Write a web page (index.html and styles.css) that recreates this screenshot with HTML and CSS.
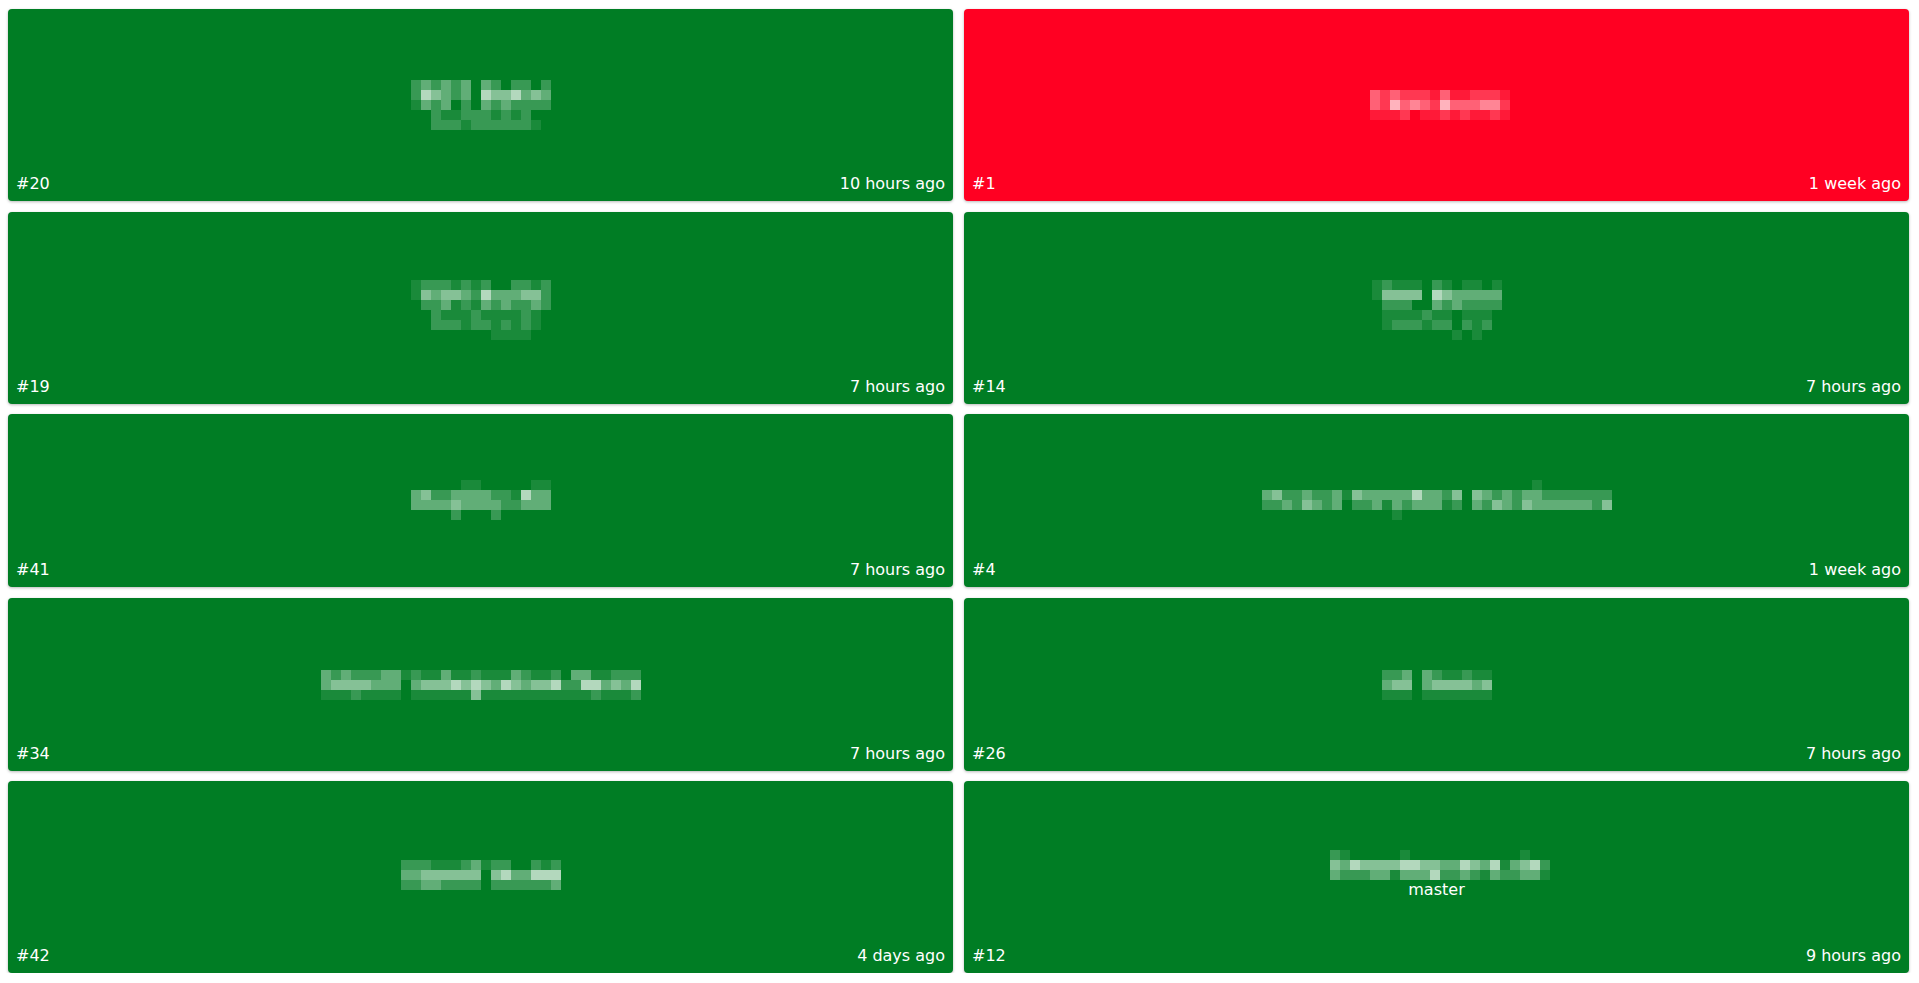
FILE: index.html
```html
<!DOCTYPE html>
<html lang="en">
<head>
<meta charset="utf-8">
<title>Builds</title>
<link rel="stylesheet" href="styles.css">
</head>
<body>
<div class="board">

  <div class="card">
    <div class="main tall">
      <div class="mosaic t63">
        <div class="mr"><i class=c2></i><i class=c3></i><i class=c2></i><i class=c3></i><i class=c2></i><i class=c3></i><i></i><i class=c3></i><i class=c2></i><i></i><i class=c2></i><i class=c2></i><i></i><i class=c2></i></div>
        <div class="mr"><i class=c2></i><i class=c5></i><i class=c4></i><i class=c3></i><i class=c2></i><i class=c3></i><i></i><i class=c5></i><i class=c4></i><i class=c4></i><i class=c5></i><i class=c3></i><i class=c4></i><i class=c3></i></div>
        <div class="mr"><i class=c1></i><i class=c3></i><i class=c2></i><i class=c3></i><i></i><i class=c2></i><i></i><i class=c3></i><i class=c2></i><i class=c3></i><i class=c2></i><i class=c2></i><i class=c2></i><i class=c2></i></div>
        <div class="mr"><i></i><i></i><i class=c2></i><i class=c1></i><i class=c1></i><i class=c2></i><i class=c2></i><i class=c2></i><i class=c1></i><i class=c2></i><i class=c1></i><i class=c2></i><i></i><i></i></div>
        <div class="mr"><i></i><i></i><i class=c2></i><i class=c2></i><i class=c2></i><i class=c1></i><i class=c2></i><i class=c2></i><i class=c2></i><i class=c2></i><i class=c2></i><i class=c2></i><i class=c1></i><i></i></div>
      </div>
    </div>
    <div class="foot"><span>#20</span><span>10 hours ago</span></div>
  </div>

  <div class="card fail">
    <div class="main">
      <div class="mosaic t73 nudge">
        <div class="mr"><i class=c3></i><i class=c2></i><i class=c3></i><i class=c2></i><i class=c2></i><i class=c2></i><i class=c1></i><i class=c3></i><i class=c1></i><i class=c1></i><i class=c2></i><i class=c2></i><i class=c2></i><i class=c1></i></div>
        <div class="mr"><i class=c3></i><i class=c2></i><i class=c5></i><i class=c3></i><i class=c4></i><i class=c3></i><i class=c2></i><i class=c5></i><i class=c3></i><i class=c3></i><i class=c3></i><i class=c4></i><i class=c4></i><i class=c2></i></div>
        <div class="mr"><i class=c1></i><i class=c1></i><i class=c1></i><i class=c2></i><i></i><i class=c1></i><i class=c1></i><i class=c2></i><i class=c1></i><i class=c2></i><i class=c1></i><i class=c1></i><i class=c2></i><i class=c1></i></div>
      </div>
    </div>
    <div class="foot"><span>#1</span><span>1 week ago</span></div>
  </div>

  <div class="card">
    <div class="main tall">
      <div class="mosaic t60">
        <div class="mr"><i class=c1></i><i class=c2></i><i class=c2></i><i class=c2></i><i class=c1></i><i class=c2></i><i class=c1></i><i class=c2></i><i></i><i></i><i class=c2></i><i class=c2></i><i class=c1></i><i class=c2></i></div>
        <div class="mr"><i class=c1></i><i class=c4></i><i class=c3></i><i class=c4></i><i class=c4></i><i class=c3></i><i class=c2></i><i class=c5></i><i class=c3></i><i class=c3></i><i class=c3></i><i class=c4></i><i class=c4></i><i class=c2></i></div>
        <div class="mr"><i></i><i class=c2></i><i class=c2></i><i class=c3></i><i class=c1></i><i class=c2></i><i class=c1></i><i class=c3></i><i class=c2></i><i class=c3></i><i class=c2></i><i class=c2></i><i class=c3></i><i class=c2></i></div>
        <div class="mr"><i></i><i></i><i class=c2></i><i class=c1></i><i class=c1></i><i class=c1></i><i class=c2></i><i class=c1></i><i class=c1></i><i class=c1></i><i class=c1></i><i class=c2></i><i class=c1></i><i></i></div>
        <div class="mr"><i></i><i></i><i class=c2></i><i class=c2></i><i class=c2></i><i class=c1></i><i class=c2></i><i class=c2></i><i class=c1></i><i class=c2></i><i class=c1></i><i class=c2></i><i class=c1></i><i></i></div>
        <div class="mr"><i></i><i></i><i></i><i></i><i></i><i></i><i></i><i></i><i class=c1></i><i class=c1></i><i class=c1></i><i class=c1></i><i></i><i></i></div>
      </div>
    </div>
    <div class="foot"><span>#19</span><span>7 hours ago</span></div>
  </div>

  <div class="card">
    <div class="main tall">
      <div class="mosaic t60">
        <div class="mr"><i class=c1></i><i class=c2></i><i class=c1></i><i class=c1></i><i class=c1></i><i></i><i class=c2></i><i class=c1></i><i></i><i class=c1></i><i class=c1></i><i></i><i class=c1></i></div>
        <div class="mr"><i class=c1></i><i class=c4></i><i class=c4></i><i class=c4></i><i class=c4></i><i></i><i class=c5></i><i class=c4></i><i class=c3></i><i class=c3></i><i class=c3></i><i class=c3></i><i class=c3></i></div>
        <div class="mr"><i></i><i class=c2></i><i class=c2></i><i class=c2></i><i></i><i></i><i class=c3></i><i class=c2></i><i class=c3></i><i class=c2></i><i class=c2></i><i class=c2></i><i class=c2></i></div>
        <div class="mr"><i></i><i class=c1></i><i class=c1></i><i class=c1></i><i class=c1></i><i class=c2></i><i class=c1></i><i class=c1></i><i></i><i class=c1></i><i class=c1></i><i class=c1></i><i></i></div>
        <div class="mr"><i></i><i class=c1></i><i class=c2></i><i class=c2></i><i class=c2></i><i class=c1></i><i class=c2></i><i class=c2></i><i></i><i class=c2></i><i class=c1></i><i class=c2></i><i></i></div>
        <div class="mr"><i></i><i></i><i></i><i></i><i></i><i></i><i></i><i></i><i class=c1></i><i></i><i class=c1></i><i></i><i></i></div>
      </div>
    </div>
    <div class="foot"><span>#14</span><span>7 hours ago</span></div>
  </div>

  <div class="card">
    <div class="main">
      <div class="mosaic t58">
        <div class="mr"><i></i><i></i><i></i><i></i><i></i><i class=c1></i><i class=c1></i><i></i><i></i><i></i><i></i><i></i><i class=c1></i><i class=c1></i></div>
        <div class="mr"><i class=c3></i><i class=c4></i><i class=c2></i><i class=c2></i><i class=c3></i><i class=c3></i><i class=c3></i><i class=c3></i><i class=c2></i><i class=c2></i><i class=c1></i><i class=c5></i><i class=c3></i><i class=c3></i></div>
        <div class="mr"><i class=c3></i><i class=c3></i><i class=c3></i><i class=c3></i><i class=c4></i><i class=c3></i><i class=c3></i><i class=c3></i><i class=c3></i><i class=c2></i><i class=c2></i><i class=c3></i><i class=c3></i><i class=c3></i></div>
        <div class="mr"><i></i><i></i><i></i><i></i><i class=c2></i><i></i><i></i><i></i><i class=c2></i><i></i><i></i><i></i><i></i><i></i></div>
      </div>
    </div>
    <div class="foot"><span>#41</span><span>7 hours ago</span></div>
  </div>

  <div class="card">
    <div class="main">
      <div class="mosaic t58">
        <div class="mr"><i></i><i></i><i></i><i></i><i></i><i></i><i></i><i></i><i></i><i></i><i></i><i></i><i></i><i></i><i></i><i></i><i></i><i></i><i></i><i></i><i></i><i></i><i></i><i></i><i></i><i></i><i></i><i class=c1></i><i></i><i></i><i></i><i></i><i></i><i></i><i></i></div>
        <div class="mr"><i class=c3></i><i class=c4></i><i class=c2></i><i class=c2></i><i class=c3></i><i class=c2></i><i class=c2></i><i class=c3></i><i class=c1></i><i class=c4></i><i class=c3></i><i class=c3></i><i class=c3></i><i class=c3></i><i class=c3></i><i class=c5></i><i class=c3></i><i class=c3></i><i class=c2></i><i class=c4></i><i></i><i class=c4></i><i class=c3></i><i class=c2></i><i class=c3></i><i class=c2></i><i class=c3></i><i class=c3></i><i class=c2></i><i class=c2></i><i class=c2></i><i class=c2></i><i class=c2></i><i class=c2></i><i class=c2></i></div>
        <div class="mr"><i class=c2></i><i class=c2></i><i class=c3></i><i class=c2></i><i class=c4></i><i class=c3></i><i class=c2></i><i class=c3></i><i></i><i class=c2></i><i class=c2></i><i class=c3></i><i class=c1></i><i class=c3></i><i class=c2></i><i class=c3></i><i class=c3></i><i class=c3></i><i class=c1></i><i class=c2></i><i></i><i class=c3></i><i class=c2></i><i class=c4></i><i class=c3></i><i class=c2></i><i class=c4></i><i class=c3></i><i class=c3></i><i class=c3></i><i class=c3></i><i class=c3></i><i class=c3></i><i class=c2></i><i class=c4></i></div>
        <div class="mr"><i></i><i></i><i></i><i></i><i></i><i></i><i></i><i></i><i></i><i></i><i></i><i></i><i></i><i class=c1></i><i></i><i></i><i></i><i></i><i></i><i></i><i></i><i></i><i></i><i></i><i></i><i></i><i></i><i></i><i></i><i></i><i></i><i></i><i></i><i></i><i></i></div>
      </div>
    </div>
    <div class="foot"><span>#4</span><span>1 week ago</span></div>
  </div>

  <div class="card">
    <div class="main">
      <div class="mosaic t64">
        <div class="mr"><i class=c3></i><i class=c2></i><i class=c3></i><i class=c2></i><i class=c2></i><i class=c2></i><i class=c3></i><i class=c3></i><i class=c1></i><i class=c2></i><i class=c1></i><i class=c1></i><i class=c3></i><i class=c1></i><i class=c1></i><i class=c2></i><i class=c1></i><i class=c1></i><i class=c1></i><i class=c3></i><i class=c2></i><i class=c1></i><i class=c1></i><i class=c2></i><i></i><i class=c3></i><i class=c3></i><i class=c1></i><i class=c1></i><i class=c2></i><i class=c2></i><i class=c2></i></div>
        <div class="mr"><i class=c3></i><i class=c4></i><i class=c4></i><i class=c4></i><i class=c4></i><i class=c3></i><i class=c3></i><i class=c3></i><i></i><i class=c3></i><i class=c4></i><i class=c4></i><i class=c4></i><i class=c5></i><i class=c4></i><i class=c5></i><i class=c4></i><i class=c3></i><i class=c5></i><i class=c4></i><i class=c3></i><i class=c4></i><i class=c4></i><i class=c5></i><i class=c2></i><i class=c2></i><i class=c5></i><i class=c5></i><i class=c3></i><i class=c4></i><i class=c3></i><i class=c5></i></div>
        <div class="mr"><i class=c1></i><i class=c1></i><i class=c1></i><i class=c2></i><i class=c1></i><i class=c1></i><i class=c1></i><i class=c1></i><i></i><i class=c1></i><i class=c1></i><i class=c1></i><i class=c1></i><i class=c1></i><i class=c1></i><i class=c4></i><i class=c1></i><i class=c1></i><i class=c1></i><i class=c1></i><i class=c1></i><i class=c1></i><i class=c1></i><i class=c1></i><i class=c1></i><i class=c1></i><i class=c1></i><i class=c2></i><i class=c1></i><i class=c1></i><i class=c1></i><i class=c2></i></div>
      </div>
    </div>
    <div class="foot"><span>#34</span><span>7 hours ago</span></div>
  </div>

  <div class="card">
    <div class="main">
      <div class="mosaic t64">
        <div class="mr"><i class=c2></i><i class=c2></i><i class=c3></i><i></i><i class=c3></i><i class=c2></i><i class=c1></i><i class=c1></i><i class=c2></i><i class=c1></i><i class=c1></i></div>
        <div class="mr"><i class=c3></i><i class=c4></i><i class=c4></i><i></i><i class=c3></i><i class=c4></i><i class=c4></i><i class=c4></i><i class=c4></i><i class=c3></i><i class=c4></i></div>
        <div class="mr"><i class=c1></i><i class=c1></i><i class=c1></i><i></i><i class=c1></i><i class=c1></i><i class=c1></i><i class=c1></i><i class=c1></i><i class=c1></i><i class=c1></i></div>
      </div>
    </div>
    <div class="foot"><span>#26</span><span>7 hours ago</span></div>
  </div>

  <div class="card">
    <div class="main">
      <div class="mosaic t71">
        <div class="mr"><i class=c2></i><i class=c2></i><i class=c2></i><i class=c1></i><i class=c1></i><i class=c1></i><i class=c2></i><i class=c3></i><i class=c1></i><i class=c2></i><i class=c2></i><i></i><i></i><i class=c2></i><i class=c1></i><i class=c2></i></div>
        <div class="mr"><i class=c3></i><i class=c3></i><i class=c4></i><i class=c4></i><i class=c4></i><i class=c4></i><i class=c4></i><i class=c4></i><i></i><i class=c4></i><i class=c5></i><i class=c3></i><i class=c3></i><i class=c5></i><i class=c5></i><i class=c5></i></div>
        <div class="mr"><i class=c2></i><i class=c2></i><i class=c3></i><i class=c3></i><i class=c2></i><i class=c2></i><i class=c2></i><i class=c2></i><i></i><i class=c2></i><i class=c2></i><i class=c2></i><i class=c2></i><i class=c2></i><i class=c2></i><i class=c3></i></div>
      </div>
    </div>
    <div class="foot"><span>#42</span><span>4 days ago</span></div>
  </div>

  <div class="card">
    <div class="main tall">
      <div class="mosaic t61 nudge">
        <div class="mr"><i class=c2></i><i class=c1></i><i></i><i></i><i></i><i></i><i></i><i class=c1></i><i></i><i></i><i></i><i></i><i></i><i></i><i></i><i></i><i></i><i></i><i></i><i class=c1></i><i></i><i></i></div>
        <div class="mr"><i class=c4></i><i class=c3></i><i class=c5></i><i class=c4></i><i class=c4></i><i class=c4></i><i class=c4></i><i class=c5></i><i class=c5></i><i class=c4></i><i class=c4></i><i class=c3></i><i class=c3></i><i class=c5></i><i class=c4></i><i class=c3></i><i class=c5></i><i class=c1></i><i class=c3></i><i class=c4></i><i class=c5></i><i class=c2></i></div>
        <div class="mr"><i class=c3></i><i class=c2></i><i class=c2></i><i class=c2></i><i class=c3></i><i class=c3></i><i class=c1></i><i class=c3></i><i class=c3></i><i class=c3></i><i class=c5></i><i class=c2></i><i class=c2></i><i class=c3></i><i class=c2></i><i class=c1></i><i class=c3></i><i class=c2></i><i class=c2></i><i class=c3></i><i class=c3></i><i class=c1></i></div>
      </div>
      <div class="sub">master</div>
    </div>
    <div class="foot"><span>#12</span><span>9 hours ago</span></div>
  </div>

</div>
</body>
</html>
```

FILE: styles.css
```css
* {
  box-sizing: border-box;
}

html,
body {
  margin: 0;
  background: #ffffff;
}

body {
  font-family: "DejaVu Sans", "Noto Sans", sans-serif;
  font-size: 16px;
  color: #ffffff;
}

.board {
  display: grid;
  grid-template-columns: 1fr 1fr;
  column-gap: 11px;
  row-gap: 10.5px;
  padding: 9px 10px 0 8px;
}

.card {
  display: flex;
  flex-direction: column;
  padding: 8px;
  border-radius: 4px;
  background: #007d24;
  box-shadow: 0 1px 3px rgba(0, 0, 0, 0.28);
}

.card.fail {
  background: #ff0022;
}

.main {
  flex: 1;
  min-height: 138px;
  display: flex;
  flex-direction: column;
  align-items: center;
}

.main.tall {
  min-height: 157px;
}

.mosaic {
  display: flex;
  flex-direction: column;
}

.mosaic.nudge {
  margin-left: 7px;
}

.mr {
  display: flex;
}

.mr i {
  display: block;
  width: 10px;
  height: 10px;
}

.mr .c1 { background: rgba(255, 255, 255, 0.1); }
.mr .c2 { background: rgba(255, 255, 255, 0.22); }
.mr .c3 { background: rgba(255, 255, 255, 0.38); }
.mr .c4 { background: rgba(255, 255, 255, 0.52); }
.mr .c5 { background: rgba(255, 255, 255, 0.7); }

.t58 { margin-top: 58px; }
.t60 { margin-top: 60px; }
.t61 { margin-top: 61px; }
.t63 { margin-top: 63px; }
.t64 { margin-top: 64px; }
.t71 { margin-top: 71px; }
.t73 { margin-top: 73px; }

.sub {
  line-height: 19px;
}

.foot {
  display: flex;
  justify-content: space-between;
  line-height: 19px;
}
```
